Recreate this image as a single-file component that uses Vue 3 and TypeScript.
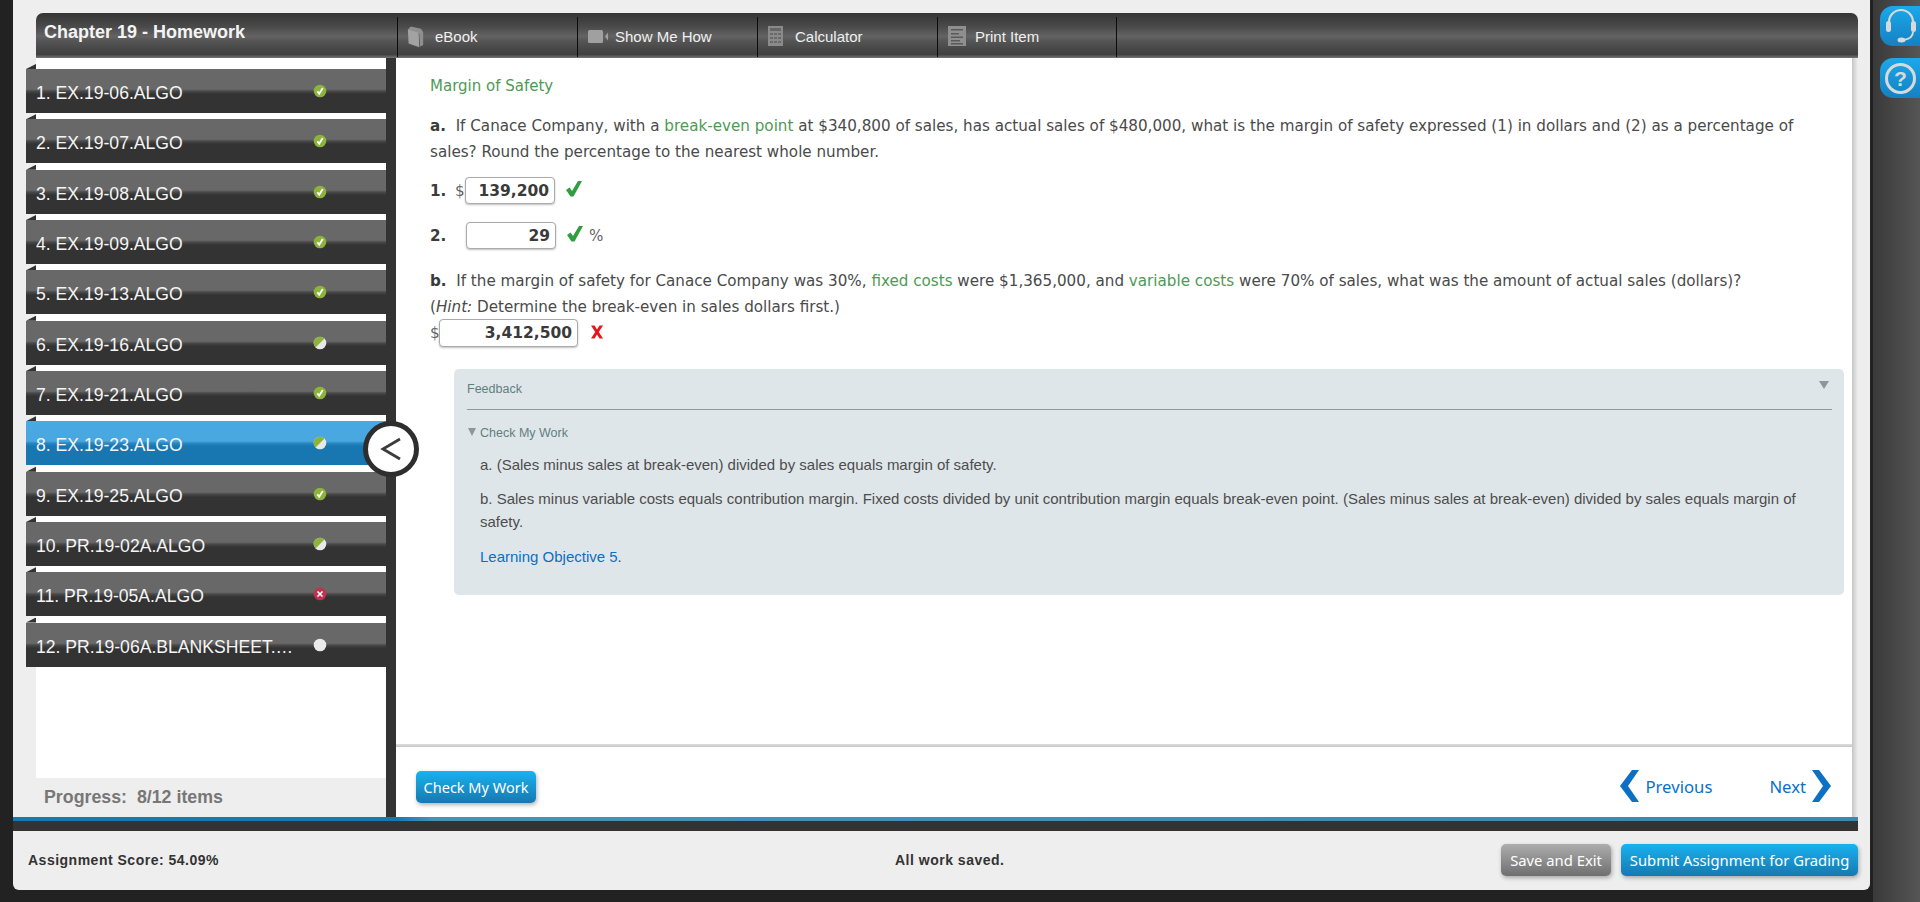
<script setup lang="ts">
type Status = 'done' | 'part' | 'wrong' | 'empty'
interface Item { label: string; status: Status; active?: boolean }
const items: Item[] = [
  { label: '1. EX.19-06.ALGO', status: 'done' },
  { label: '2. EX.19-07.ALGO', status: 'done' },
  { label: '3. EX.19-08.ALGO', status: 'done' },
  { label: '4. EX.19-09.ALGO', status: 'done' },
  { label: '5. EX.19-13.ALGO', status: 'done' },
  { label: '6. EX.19-16.ALGO', status: 'part' },
  { label: '7. EX.19-21.ALGO', status: 'done' },
  { label: '8. EX.19-23.ALGO', status: 'part', active: true },
  { label: '9. EX.19-25.ALGO', status: 'done' },
  { label: '10. PR.19-02A.ALGO', status: 'part' },
  { label: '11. PR.19-05A.ALGO', status: 'wrong' },
  { label: '12. PR.19-06A.BLANKSHEET.ALGO', status: 'empty' },
]
</script>

<template>
  <div class="page">
    <div class="panel">
      <header class="head">
        <div class="title">Chapter 19 - Homework</div>
        <div class="tab">
          <svg class="tab-ico" width="17" height="23" viewBox="0 0 22 30"><path d="M1 6 L5 2 L18 5 L21 9 L21 26 L17 28 L16 11 L4 8 Z" fill="#8f8f8f"/><path d="M1 6 L15 10 L16 29 L2 24 Z" fill="#a2a2a2"/></svg>
          <span>eBook</span>
        </div>
        <div class="tab">
          <svg class="tab-ico" width="20" height="13" viewBox="0 0 20 13"><rect x="0" y="0" width="15" height="13" rx="1.500" fill="#a0a0a0"/><path d="M17 6.500 L20 2.500 L20 10.500 Z" fill="#a0a0a0"/></svg>
          <span>Show Me How</span>
        </div>
        <div class="tab">
          <svg class="tab-ico" width="15" height="20" viewBox="0 0 15 20"><rect width="15" height="20" fill="#8a8a8a"/><rect x="2" y="2" width="11" height="3" fill="#666"/><path d="M2 7h3v2H2zM6 7h3v2H6zM10 7h3v2h-3zM2 11h3v2H2zM6 11h3v2H6zM10 11h3v2h-3zM2 15h3v2H2zM6 15h3v2H6zM10 15h3v2h-3z" fill="#6a6a6a"/></svg>
          <span>Calculator</span>
        </div>
        <div class="tab">
          <svg class="tab-ico" width="18" height="20" viewBox="0 0 18 20"><rect width="18" height="20" fill="#8f8f8f"/><path d="M3 3h12v1.500H3zM3 7h8v1.500H3zM3 10.500h12v1.500H3zM3 14h9v1.500H3zM3 17h12v1.500H3z" fill="#5a5a5a"/></svg>
          <span>Print Item</span>
        </div>
      </header>

      <div class="body">
        <aside class="side">
          <ul class="list">
            <li v-for="it in items" :key="it.label" class="item" :class="{ active: it.active }">
              <span class="name">{{ it.label }}</span>
              <svg class="dot" width="14" height="14" viewBox="0 0 14 14">
                <template v-if="it.status === 'done'">
                  <circle cx="7" cy="7" r="6.300" fill="#8cb33a"/>
                  <path d="M4.300 7.300 L6.200 9.700 L9.800 4" fill="none" stroke="#fff" stroke-width="1.900"/>
                </template>
                <template v-else-if="it.status === 'part'">
                  <circle cx="7" cy="7" r="6.300" fill="#e8e8e8"/>
                  <path d="M2.500 11.500 A6.300 6.300 0 0 1 11.500 2.500 Z" fill="#8cb33a"/>
                </template>
                <template v-else-if="it.status === 'wrong'">
                  <circle cx="7" cy="7" r="6.300" fill="#c0304f"/>
                  <path d="M4.500 4.500 L9.500 9.500 M9.500 4.500 L4.500 9.500" stroke="#fff" stroke-width="1.600"/>
                </template>
                <circle v-else cx="7" cy="7" r="6.300" fill="#eaeaea"/>
              </svg>
            </li>
          </ul>
          <div class="progress">Progress:&nbsp; 8/12 items</div>
        </aside>

        <div class="divider"></div>

        <main class="main">
          <section class="content">
            <h2 class="topic">Margin of Safety</h2>
            <p class="para"><b>a.</b>&nbsp; If Canace Company, with a <span class="term">break-even point</span> at $340,800 of sales, has actual sales of $480,000, what is the margin of safety expressed (1) in dollars and (2) as a percentage of sales? Round the percentage to the nearest whole number.</p>

            <div class="row row-1">
              <b class="num">1.</b><span class="cur">$</span>
              <span class="field f1">139,200</span>
              <svg class="mark" width="16" height="16" viewBox="0 0 16 16"><path d="M0 9 L3.500 6.500 L6 10 L12 0 L16 0 L7.500 15.500 L4.500 15.500 Z" fill="#2f9e3f"/></svg>
            </div>
            <div class="row row-2">
              <b class="num">2.</b>
              <span class="field f2">29</span>
              <svg class="mark" width="16" height="16" viewBox="0 0 16 16"><path d="M0 9 L3.500 6.500 L6 10 L12 0 L16 0 L7.500 15.500 L4.500 15.500 Z" fill="#2f9e3f"/></svg>
              <span class="pct">%</span>
            </div>

            <p class="para para-b"><b>b.</b>&nbsp; If the margin of safety for Canace Company was 30%, <span class="term">fixed costs</span> were $1,365,000, and <span class="term">variable costs</span> were 70% of sales, what was the amount of actual sales (dollars)?<br>(<i>Hint:</i> Determine the break-even in sales dollars first.)</p>
            <div class="row row-3">
              <span class="cur">$</span>
              <span class="field f3">3,412,500</span>
              <svg class="cross" width="14" height="14" viewBox="0 0 14 14"><path d="M1 0.500 L4.500 0.500 L7 4.500 L9.500 0.500 L13 0.500 L8.800 7 L13 13.500 L9.500 13.500 L7 9.500 L4.500 13.500 L1 13.500 L5.200 7 Z" fill="#e8141c"/></svg>
            </div>

            <div class="feedback">
              <div class="fb-head">
                <span>Feedback</span>
                <svg width="10" height="8" viewBox="0 0 10 8"><path d="M0 0 H10 L5 8 Z" fill="#8d9699"/></svg>
              </div>
              <div class="fb-check">
                <svg width="8" height="8" viewBox="0 0 8 8"><path d="M0 0 H8 L4 8 Z" fill="#8d9699"/></svg>
                <span>Check My Work</span>
              </div>
              <div class="fb-body">
                <p class="fb-a">a. (Sales minus sales at break-even) divided by sales equals margin of safety.</p>
                <p class="fb-b">b. Sales minus variable costs equals contribution margin. Fixed costs divided by unit contribution margin equals break-even point. (Sales minus sales at break-even) divided by sales equals margin of safety.</p>
                <p class="fb-lo"><span class="lo">Learning Objective 5</span>.</p>
              </div>
            </div>
          </section>

          <footer class="actions">
            <button class="btn check" type="button">Check My Work</button>
            <nav class="pager">
              <a class="prev">
                <svg width="19" height="32" viewBox="0 0 19 32"><path d="M12 0 H19 L8 16 L19 32 H12 L0 16 Z" fill="#0c70c4"/></svg>
                <span>Previous</span>
              </a>
              <a class="next">
                <span>Next</span>
                <svg width="19" height="32" viewBox="0 0 19 32"><path d="M0 0 H7 L19 16 L7 32 H0 L11 16 Z" fill="#0c70c4"/></svg>
              </a>
            </nav>
          </footer>
        </main>

        <button class="toggle" type="button" aria-label="Collapse">
          <svg width="24" height="24" viewBox="0 0 24 24"><path d="M21 2 L4 12 L21 22" fill="none" stroke="#3c3c3c" stroke-width="2.800"/></svg>
        </button>
      </div>

      <div class="blue"></div>
      <div class="dark"></div>

      <div class="bar">
        <div class="score">Assignment Score: 54.09%</div>
        <div class="saved">All work saved.</div>
        <div class="bar-btns">
          <button class="btn save" type="button">Save and Exit</button>
          <button class="btn submit" type="button">Submit Assignment for Grading</button>
        </div>
      </div>
    </div>

    <div class="rail">
      <button class="rail-btn" type="button" aria-label="Support">
        <svg width="32" height="36" viewBox="0 0 32 36"><path d="M4 19 V14 A12 12 0 0 1 28 14 V19" fill="none" stroke="#d9d9d9" stroke-width="2.200"/><rect x="1" y="13" width="5" height="11" rx="2.500" fill="#d9d9d9"/><rect x="26" y="13" width="5" height="11" rx="2.500" fill="#d9d9d9"/><path d="M28 24 C28 29 24 31 19 32" fill="none" stroke="#d9d9d9" stroke-width="1.800"/><ellipse cx="16.500" cy="32" rx="4" ry="2.500" fill="#d9d9d9"/></svg>
      </button>
      <button class="rail-btn q" type="button" aria-label="Help">
        <span class="q-ring">?</span>
      </button>
    </div>
  </div>
</template>

<style>
html, body { margin: 0; background: #222; }
</style>

<style scoped>
* { box-sizing: border-box; }
.page { display: flex; width: 1920px; height: 902px; overflow: hidden; background: #222; font-family: "Liberation Sans", Arial, sans-serif; }
.panel { width: 1857px; height: 890px; margin-left: 13px; padding: 13px 12px 0 0; background: #eee; border-radius: 0 0 6px 6px; display: flex; flex-direction: column; }

.head { height: 45px; margin-left: 23px; display: flex; align-items: stretch; flex: none; border-radius: 7px 7px 0 0; background: linear-gradient(180deg, #353535 0%, #4a4a4a 30%, #636363 52%, #555 62%, #3f3f3f 92%, #777 100%); color: #fff; }
.title { width: 361px; padding: 9px 0 0 8px; font-size: 18px; font-weight: 700; line-height: 20px; color: #f4f4f4; }
.tab { width: 180px; margin-top: 4px; margin-bottom: 1px; padding-bottom: 2px; border-left: 1px solid #0c0c0c; display: flex; align-items: center; font-size: 15px; color: #f0f0f0; }
.tab:last-child { width: 180px; border-right: 1px solid #0c0c0c; }
.tab-ico { margin-left: 9px; margin-right: 11px; flex: none; }
.tab:nth-child(3) .tab-ico { margin-left: 10px; margin-right: 7px; }
.tab:nth-child(4) .tab-ico { margin-left: 10px; margin-right: 12px; }
.tab:nth-child(5) .tab-ico { margin-left: 10px; margin-right: 9px; }

.body { position: relative; flex: none; height: 759px; display: flex; }
.side { width: 373px; flex: none; display: flex; flex-direction: column; }
.list { margin: 0 0 0 23px; height: 720px; padding: 11px 0 0; list-style: none; background: #fff; flex: none; }
.item { position: relative; margin: 0 0 6.33px -10px; width: 360px; height: 44px; padding: 5px 0 0 10px; display: flex; align-items: center; color: #f5f5f5; font-size: 17.6px; background: linear-gradient(180deg, #686868 0%, #686868 46%, #4a4a4a 50%, #333 57%, #333 100%); }
.item::before { content: ""; position: absolute; left: 0; top: -5px; width: 10px; height: 5px; background: #333; clip-path: polygon(0 100%, 100% 0, 100% 100%); }
.item.active { background: linear-gradient(180deg, #4aa9e2 0%, #49a7e0 46%, #2a88c2 50%, #1877b1 57%, #1877b1 100%); }
.name { width: 258px; flex: none; white-space: nowrap; overflow: hidden; text-overflow: ellipsis; }
.dot { margin-left: 19px; margin-top: -5px; flex: none; }
.progress { margin-top: 9px; padding-left: 31px; font-size: 17.8px; line-height: 20px; font-weight: 700; color: #777; }

.divider { width: 10px; flex: none; background: #333; }
.main { flex: 1; min-width: 0; display: flex; flex-direction: column; background: linear-gradient(90deg, #fff 1456px, #c6c6c6 1456px, #eee 100%); }
.content { flex: 1; padding: 16px 0 0 34px; font-family: "DejaVu Sans", Verdana, sans-serif; color: #4a4a4a; font-size: 15.17px; }
.topic { margin: 0; font-size: 15px; line-height: 24px; font-weight: 400; color: #4e9a54; }
.para { margin: 15px 0 0; width: 1390px; line-height: 26px; }
.para b, .num { color: #3a3a3a; font-weight: 700; }
.term { color: #4e9a54; }
.row { display: flex; align-items: center; height: 27px; }
.row-1 { margin-top: 12px; }
.row-2 { margin-top: 18px; }
.row-3 { margin-top: -1px; height: 28px; }
.para-b { margin-top: 19px; }
.num { width: 25px; flex: none; }
.cur { width: 10px; flex: none; color: #666; }
.row-3 .cur { width: 9px; }
.field { display: block; height: 100%; padding: 0 5px; border: 1px solid #aaa; border-radius: 4px; box-shadow: 0 1px 2px rgba(0,0,0,.25); background: #fff; text-align: right; font-size: 15.5px; font-weight: 700; line-height: 27px; color: #3a3a3a; }
.f1 { width: 90px; }
.f2 { width: 90px; margin-left: 11px; }
.f3 { width: 139px; }
.mark { margin-left: 11px; margin-top: -4px; }
.cross { margin-left: 12px; margin-top: -2px; }
.pct { margin-left: 6px; color: #666; }

.feedback { width: 1390px; height: 226px; margin: 22px 0 0 24px; padding: 0 12px 0 13px; background: #dfe6e9; border-radius: 5px; font-family: "Liberation Sans", Arial, sans-serif; }
.fb-head { height: 41px; padding: 10px 3px 0 0; display: flex; justify-content: space-between; border-bottom: 1px solid #8f9a9e; font-size: 12.5px; line-height: 20px; color: #5f7f7f; }
.fb-head svg { margin-top: 2px; }
.fb-check { margin-top: 14px; display: flex; align-items: center; height: 18px; font-size: 12.5px; color: #5f7f7f; }
.fb-check svg { margin: -2px 4px 0 1px; }
.fb-body { padding-left: 13px; font-size: 15px; color: #4d4d4d; }
.fb-a { margin: 12px 0 0; line-height: 22px; }
.fb-b { margin: 12px 0 0; line-height: 22.5px; }
.fb-lo { margin: 13px 0 0; line-height: 22px; }
.lo { color: #0b6fc2; }

.actions { flex: none; height: 73px; margin-right: 6px; padding: 27px 21px 0 20px; display: flex; justify-content: space-between; background: linear-gradient(180deg, #dedede 0, #c8c8c8 3px, #fff 3px); }
.btn { border: none; border-radius: 5px; padding: 0; color: #fff; font-family: "Noto Sans", Tahoma, sans-serif; font-size: 14.5px; box-shadow: 1px 2px 4px rgba(0,0,0,.3); }
.check { width: 120px; height: 32px; background: linear-gradient(180deg, #18b2f0, #1878b0); }
.pager { display: flex; margin-top: -1px; color: #0c70c4; font-family: "Noto Sans", Tahoma, sans-serif; font-size: 16.7px; }
.prev, .next { display: flex; align-items: center; height: 32px; }
.prev span { margin-left: 6px; }
.next { margin-left: 57px; }
.next svg { margin-left: 6px; }

.toggle { position: absolute; left: 350px; top: 363px; width: 56px; height: 56px; padding: 0; border: 5px solid #2e2e2e; border-radius: 50%; background: #fff; display: flex; align-items: center; justify-content: center; }

.blue { height: 4px; flex: none; background: linear-gradient(90deg, #1878b0 0, #1878b0 383px, #4a90bd 420px, #3f86b5 100%); }
.dark { height: 10px; flex: none; background: #333; }
.bar { flex: 1; display: grid; grid-template-columns: 867px auto 1fr; align-items: center; padding: 0 0 2px 15px; font-size: 14px; font-weight: 700; color: #333; letter-spacing: .5px; }
.bar-btns { justify-self: end; display: flex; gap: 10px; letter-spacing: 0; font-weight: 400; }
.bar .btn { font-size: 14.8px; }
.save { width: 110px; height: 32px; background: linear-gradient(180deg, #adadad, #6f6f6f); }
.submit { width: 237px; height: 32px; background: linear-gradient(180deg, #18b2f0, #1878b0); }

.rail { flex: 1; padding: 6px 0 0 10px; display: flex; flex-direction: column; gap: 12px; background: linear-gradient(90deg, #222 3px, #3a3a3a 3px, #555 100%); }
.rail-btn { width: 40px; height: 40px; padding: 0 0 0 2px; border: none; border-radius: 13px 0 0 13px; background: linear-gradient(180deg, #1aa9ea, #1580c2); display: flex; align-items: center; justify-content: flex-start; }
.rail-btn svg { margin-left: 3px; }
.q-ring { width: 31px; height: 31px; margin-left: 3px; border: 3px solid #d9d9d9; border-radius: 50%; color: #d9d9d9; font: 700 21px/25px "Liberation Sans", sans-serif; text-align: center; }
</style>
